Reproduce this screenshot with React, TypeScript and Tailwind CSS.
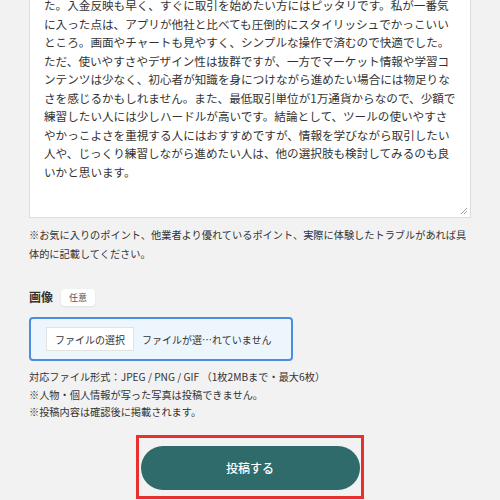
const reviewLines = [
  "た。入金反映も早く、すぐに取引を始めたい方にはピッタリです。私が一番気",
  "に入った点は、アプリが他社と比べても圧倒的にスタイリッシュでかっこいい",
  "ところ。画面やチャートも見やすく、シンプルな操作で済むので快適でした。",
  "ただ、使いやすさやデザイン性は抜群ですが、一方でマーケット情報や学習コ",
  "ンテンツは少なく、初心者が知識を身につけながら進めたい場合には物足りな",
  "さを感じるかもしれません。また、最低取引単位が1万通貨からなので、少額で",
  "練習したい人には少しハードルが高いです。結論として、ツールの使いやすさ",
  "やかっこよさを重視する人にはおすすめですが、情報を学びながら取引したい",
  "人や、じっくり練習しながら進めたい人は、他の選択肢も検討してみるのも良",
  "いかと思います。",
];

const notes = [
  "対応ファイル形式：JPEG / PNG / GIF （1枚2MBまで・最大6枚）",
  "※人物・個人情報が写った写真は投稿できません。",
  "※投稿内容は確認後に掲載されます。",
];

export default function App() {
  return (
    <div
      className="h-[500px] w-[500px] overflow-hidden bg-[#f2f2f2] text-[#333]"
      style={{ fontFamily: '"Noto Sans CJK JP", "Noto Sans", sans-serif' }}
    >
      <div className="px-[29px]">
        {/* textarea */}
        <div className="relative -mt-[12px] h-[230px] border border-[#dcdcdc] bg-white pl-[14px] pt-[7px]">
          {reviewLines.map((line) => (
            <div key={line} className="whitespace-nowrap text-[11.6px] leading-[18.5px]">
              {line}
            </div>
          ))}
          <svg
            className="absolute bottom-[2px] right-[2px]"
            width="8"
            height="8"
            viewBox="0 0 8 8"
          >
            <path d="M7 1 L1 7 M7 4 L4 7" stroke="#9a9a9a" strokeWidth="1" />
          </svg>
        </div>

        <div className="mt-[7px] text-[10.2px] leading-[19px] whitespace-nowrap">
          <div>※お気に入りのポイント、他業者より優れているポイント、実際に体験したトラブルがあれば具</div>
          <div>体的に記載してください。</div>
        </div>

        {/* image upload */}
        <div className="mt-[25px] flex items-center gap-[8px]">
          <span className="text-[12px] font-bold leading-[18px]">画像</span>
          <span className="rounded-[4px] bg-white px-[8px] text-[9px] leading-[17px] text-[#555] shadow-[0_1px_2px_rgba(0,0,0,0.08)]">
            任意
          </span>
        </div>

        <div className="mt-[11px] flex h-[44px] w-[264px] items-center rounded-[4px] border-2 border-[#4a8ee0] bg-[#eef6fd] pl-[15px]">
          <span className="flex h-[24px] items-center border border-[#e2e2e2] bg-white px-[8px] text-[10px] text-[#333]">
            ファイルの選択
          </span>
          <span className="ml-[8px] text-[10px] text-[#333]">ファイルが選…れていません</span>
        </div>

        <div className="mt-[7px] text-[10.2px] leading-[17.5px] whitespace-nowrap">
          {notes.map((n) => (
            <div key={n}>{n}</div>
          ))}
        </div>
      </div>

      {/* submit */}
      <div className="mt-[14px] flex justify-center">
        <div className="flex h-[64px] w-[228px] justify-center border-[3px] border-[#e8312f] pt-[8px]">
          <button className="h-[44px] w-[219px] rounded-full bg-[#2f6b6b] text-[12px] font-medium text-white">
            投稿する
          </button>
        </div>
      </div>
    </div>
  );
}
